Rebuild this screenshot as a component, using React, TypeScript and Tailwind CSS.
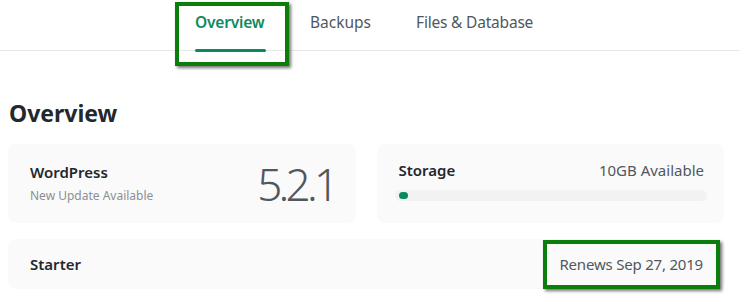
import React from "react";

export default function App() {
  const font = { fontFamily: '"Noto Sans", "Open Sans", sans-serif' } as React.CSSProperties;
  return (
    <div className="relative w-[740px] h-[303px] bg-white overflow-hidden" style={font}>
      {/* Tabs */}
      <div className="h-[51px] border-b border-[#e8e8e8] flex items-stretch pl-[195px]">
        <div className="relative w-[71px] flex items-start pt-[11px] mr-[44px]">
          <span className="text-[15.5px] font-semibold text-[#0c8a5f] tracking-[-0.2px]">Overview</span>
          <div className="absolute left-0 right-0 bottom-[-2px] h-[3px] rounded-full bg-[#0c8a5f]" />
        </div>
        <div className="flex items-start pt-[11px] mr-[45px]">
          <span className="text-[15.5px] text-[#50575e]">Backups</span>
        </div>
        <div className="flex items-start pt-[11px]">
          <span className="text-[15.5px] text-[#50575e] tracking-[-0.2px]">Files &amp; Database</span>
        </div>
      </div>

      <div className="pl-[8px] pr-[16px]">
        <h1 className="mt-[46px] ml-[1px] text-[23px] leading-[32px] font-bold text-[#23282d]">Overview</h1>

        <div className="mt-[15px] flex gap-[21px]">
          <div className="w-[348px] h-[79px] rounded-[8px] bg-[#fafafa] flex items-center justify-between pl-[22px] pr-[20px]">
            <div className="flex flex-col">
              <span className="text-[15px] leading-[20px] font-semibold text-[#23282d]">WordPress</span>
              <span className="mt-[5px] text-[12px] leading-[18px] text-[#8c8f94]">New Update Available</span>
            </div>
            <span className="text-[44px] leading-[48px] font-light text-[#50575e] tracking-[-3.7px]">5.2.1</span>
          </div>
          <div className="w-[348px] h-[79px] rounded-[8px] bg-[#fafafa] flex flex-col pt-[16px] pl-[22px] pr-[20px]">
            <div className="flex items-center justify-between">
              <span className="text-[15px] leading-[20px] font-semibold text-[#23282d]">Storage</span>
              <span className="text-[15px] leading-[20px] text-[#50575e]">10GB Available</span>
            </div>
            <div className="mt-[10px] ml-[-4px] mr-[-3px] h-[11px] rounded-full bg-[#f2f2f2] flex items-center pl-[4px]">
              <div className="w-[9px] h-[7px] rounded-full bg-[#0c8a5f]" />
            </div>
          </div>
        </div>

        <div className="mt-[16px] w-[717px] h-[50px] rounded-[8px] bg-[#fafafa] flex items-center justify-between pl-[22px] pr-[22px]">
          <span className="text-[15px] font-semibold text-[#23282d]">Starter</span>
          <span className="text-[15px] text-[#50575e] tracking-[-0.2px]">Renews Sep 27, 2019</span>
        </div>
      </div>

      {/* Annotation boxes */}
      <div className="absolute left-[175px] top-[2px] w-[114px] h-[64px] border-[4px] border-[#0a7d0a] shadow-[2px_2px_3px_rgba(0,0,0,0.55)]" />
      <div className="absolute left-[543px] top-[240px] w-[177px] h-[49px] border-[4px] border-[#0a7d0a] shadow-[2px_2px_3px_rgba(0,0,0,0.55)]" />
    </div>
  );
}
